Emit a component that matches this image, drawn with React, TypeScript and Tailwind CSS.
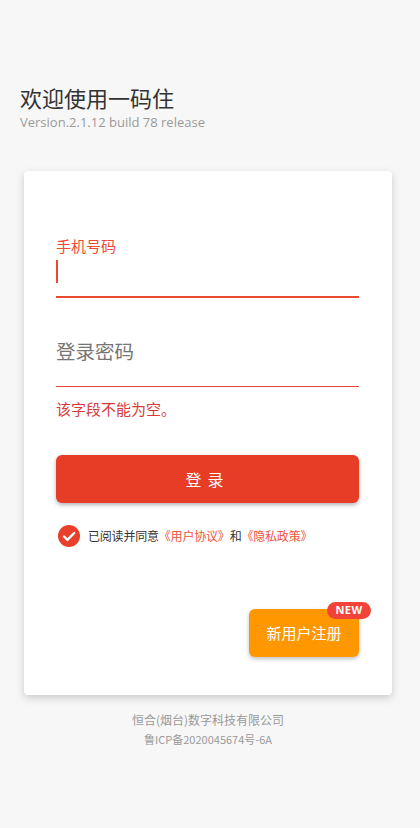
import React from "react";

const CJK = "font-['Noto_Sans_CJK_SC','Noto_Sans',sans-serif]";

function CheckCircle() {
  return (
    <svg width="22" height="22" viewBox="0 0 22 22">
      <circle cx="11" cy="11" r="11" fill="#e8402a" />
      <path
        d="M6 11.5l3.4 3.4L16.2 8"
        fill="none"
        stroke="#fff"
        strokeWidth="2.4"
        strokeLinecap="round"
        strokeLinejoin="round"
      />
    </svg>
  );
}

export default function App() {
  return (
    <div className={`min-h-[828px] w-[420px] bg-[#f7f7f7] ${CJK}`}>
      {/* header */}
      <div className="px-5 pt-[82px]">
        <h1 className="text-[22px] leading-[30px] text-[#333]">欢迎使用一码住</h1>
        <p className="mt-[1px] font-['Open_Sans',sans-serif] text-[13px] leading-[18px] text-[#9a9a9a]">
          Version.2.1.12 build 78 release
        </p>
      </div>

      {/* card */}
      <div className="ml-6 mr-7 mt-[40px] rounded-[4px] bg-white pl-8 pr-[33px] pt-[65px] pb-[38px] shadow-[0_3px_8px_rgba(0,0,0,0.18)]">
        {/* phone */}
        <div className="text-[15px] leading-5 text-[#ee4b35]">手机号码</div>
        <div className="h-10 pt-1">
          <div className="h-[23px] w-[2px] bg-[#ea4a32]" />
        </div>
        <div className="h-[2px] bg-[#ea4a32]" />

        {/* password */}
        <div className="mt-10 text-[19.5px] leading-[26px] text-[#757575]">登录密码</div>
        <div className="mt-[22px] h-px bg-[#e5433d]" />
        <div className="mt-3 text-[15px] leading-5 text-[#d63b3b]">该字段不能为空。</div>

        {/* login button */}
        <button className="mt-9 flex h-12 w-full items-center justify-center rounded-[6px] bg-[#e73c25] text-[16px] tracking-[6px] text-white shadow-[0_2px_4px_rgba(0,0,0,0.3)]">
          登录
        </button>

        {/* agreement */}
        <div className="mt-[22px] flex h-[22px] items-center pl-[2px]">
          <CheckCircle />
          <span className="ml-2 text-[12px] tracking-[-0.2px] text-[#333]">
            已阅读并同意
            <span className="text-[#f0553c]">《用户协议》</span>和
            <span className="text-[#f0553c]">《隐私政策》</span>
          </span>
        </div>

        {/* register */}
        <div className="mt-[62px] flex justify-end">
          <div className="relative">
            <button className="flex h-12 w-[110px] items-center justify-center rounded-[6px] bg-[#ff9800] text-[15px] text-white shadow-[0_2px_4px_rgba(0,0,0,0.25)]">
              新用户注册
            </button>
            <span className="absolute -top-[7px] -right-[12px] flex h-[17px] w-[44px] items-center justify-center rounded-full bg-[#f2433a] font-['Open_Sans',sans-serif] text-[11px] font-bold tracking-[0.5px] text-white">
              NEW
            </span>
          </div>
        </div>
      </div>

      {/* footer */}
      <div className="mr-1 mt-[16px] flex flex-col items-center">
        <div className="text-[12px] leading-[18px] text-[#9a9a9a]">恒合(烟台)数字科技有限公司</div>
        <div className="mt-[2px] text-[11px] leading-4 text-[#9a9a9a]">鲁ICP备2020045674号-6A</div>
      </div>
    </div>
  );
}
